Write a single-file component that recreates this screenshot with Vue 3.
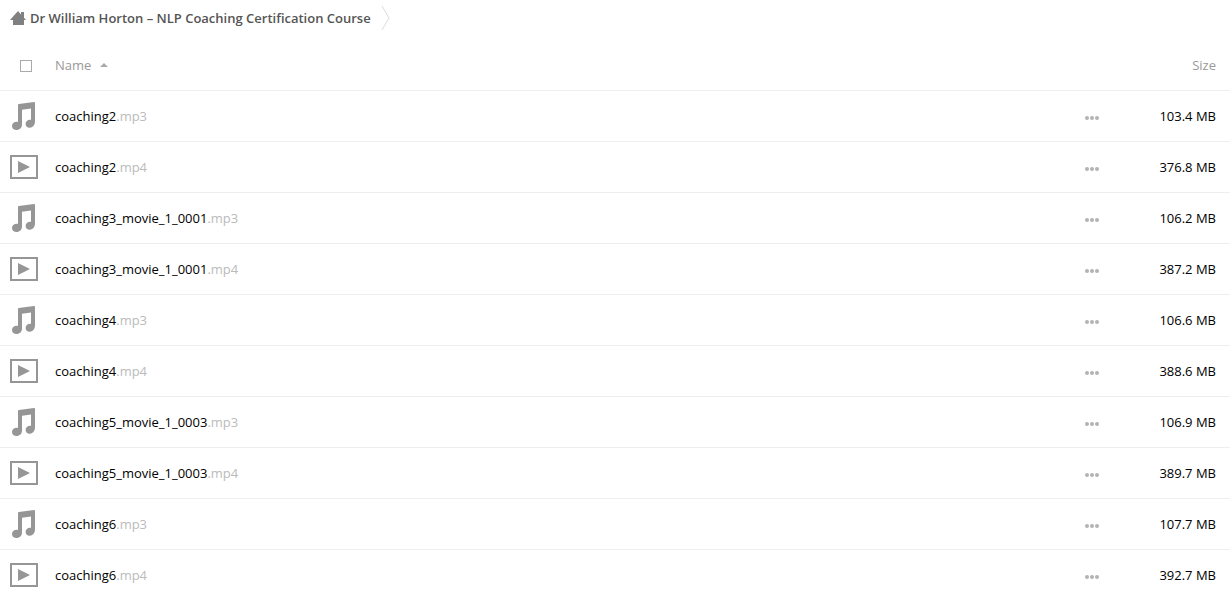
<script setup>
import { ref } from 'vue'

const allSelected = ref(false)
const files = [
  { name: 'coaching2', ext: '.mp3', size: '103.4 MB' },
  { name: 'coaching2', ext: '.mp4', size: '376.8 MB' },
  { name: 'coaching3_movie_1_0001', ext: '.mp3', size: '106.2 MB' },
  { name: 'coaching3_movie_1_0001', ext: '.mp4', size: '387.2 MB' },
  { name: 'coaching4', ext: '.mp3', size: '106.6 MB' },
  { name: 'coaching4', ext: '.mp4', size: '388.6 MB' },
  { name: 'coaching5_movie_1_0003', ext: '.mp3', size: '106.9 MB' },
  { name: 'coaching5_movie_1_0003', ext: '.mp4', size: '389.7 MB' },
  { name: 'coaching6', ext: '.mp3', size: '107.7 MB' },
  { name: 'coaching6', ext: '.mp4', size: '392.7 MB' },
]
</script>

<template>
  <main class="files">
    <nav class="crumbs">
      <a class="crumb" href="#">
        <svg class="home" viewBox="0 0 16 16" width="16" height="16" aria-hidden="true">
          <path d="M8 1 0 10h3v5h11v-5h2l-2-2.200V2h-3v2.400z" />
        </svg>
        <span>Dr William Horton – NLP Coaching Certification Course</span>
      </a>
      <svg class="separator" viewBox="0 0 10 26" width="10" height="26" aria-hidden="true">
        <path d="M1 1 8 13 1 25" />
      </svg>
    </nav>

    <table class="list">
      <thead>
        <tr>
          <th class="pick" scope="col">
            <input v-model="allSelected" class="box" type="checkbox" aria-label="Select all files">
          </th>
          <th class="name" scope="col">
            <button class="sort" type="button">
              <span>Name</span>
              <svg viewBox="0 0 8 4" width="8" height="4" aria-hidden="true"><path d="M4 0 8 4H0z" /></svg>
            </button>
          </th>
          <th class="actions" scope="col"></th>
          <th class="size" scope="col">
            <button class="sort" type="button">Size</button>
          </th>
        </tr>
      </thead>
      <tbody>
        <tr v-for="file in files" :key="file.name + file.ext">
          <td class="pick">
            <svg v-if="file.ext === '.mp3'" class="type" viewBox="0 0 32 32" width="32" height="32" aria-hidden="true">
              <path d="M10 4.7Q10 4 10.800 3.900L26 2Q27 1.900 27 2.900V21.500C27 24.500 25 27.500 22 27.800C19.500 28 17.600 26.300 17.600 24C17.600 21.200 20 19.300 23 19.800V8.500L14 9.700V24.500C14 27.700 11.600 30 8.600 30C6 30 4 28.400 4 26C4 23.200 6.700 21.300 10 22z" />
            </svg>
            <svg v-else class="type" viewBox="0 0 32 32" width="32" height="32" aria-hidden="true">
              <path fill-rule="evenodd" d="M2 4h28v24H2zM4 6v20h24V6zM10 10l12 6-12 6z" />
            </svg>
          </td>
          <td class="name">
            <a class="file" href="#">{{ file.name }}<span class="ext">{{ file.ext }}</span></a>
          </td>
          <td class="actions">
            <button class="more" type="button" :aria-label="'Actions for ' + file.name + file.ext">
              <svg viewBox="0 0 16 16" width="16" height="16" aria-hidden="true">
                <circle cx="3" cy="8" r="2" /><circle cx="8" cy="8" r="2" /><circle cx="13" cy="8" r="2" />
              </svg>
            </button>
          </td>
          <td class="size">{{ file.size }}</td>
        </tr>
      </tbody>
    </table>
  </main>
</template>

<style>
html {
  scrollbar-width: none;
}
body {
  margin: 0;
  background: #fff;
}
</style>

<style scoped>
.files {
  font: 13px/20px "Open Sans", "Noto Sans", sans-serif;
  color: #000;
}
.crumbs {
  display: flex;
  align-items: center;
  height: 36px;
  padding-left: 10px;
  gap: 10px;
}
.crumb {
  display: flex;
  align-items: center;
  gap: 4px;
  color: #555;
  font-weight: 600;
  text-decoration: none;
}
.home {
  fill: #808080;
}
.separator {
  fill: none;
  stroke: #ddd;
}
.list {
  width: 100%;
  table-layout: fixed;
  border-collapse: separate;
  border-spacing: 0;
}
th,
td {
  height: 50px;
  padding: 0;
  border-bottom: 1px solid #eee;
  text-align: left;
  vertical-align: middle;
  font-weight: 400;
}
th {
  height: 54px;
}
th > * {
  vertical-align: middle;
}
.pick {
  width: 55px;
}
.actions {
  width: 36px;
}
.size {
  width: 96px;
  padding-right: 14px;
  text-align: right;
}
.box {
  appearance: none;
  display: block;
  box-sizing: border-box;
  width: 12px;
  height: 12px;
  margin: 6px 0 0 20px;
  border: 1px solid #aaa;
  background: #fff;
}
.box:checked {
  background: #aaa;
}
.sort {
  display: inline-flex;
  align-items: center;
  gap: 9px;
  margin: 0;
  padding: 3px 0 0;
  border: 0;
  background: none;
  color: #999;
  font: inherit;
}
.sort svg {
  fill: #aaa;
}
.type {
  display: block;
  margin-left: 8px;
  fill: #969696;
}
.file {
  color: inherit;
  text-decoration: none;
}
.ext {
  color: #bbb;
}
.more {
  display: block;
  margin: 0;
  padding: 4px 0 0;
  border: 0;
  background: none;
  line-height: 0;
}
.more svg {
  fill: #b3b3b3;
}
</style>
